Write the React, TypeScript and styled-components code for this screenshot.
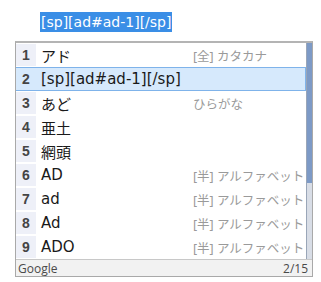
import React from 'react';
import styled, { createGlobalStyle } from 'styled-components';

const GlobalStyle = createGlobalStyle`
  body {
    margin: 0;
    background: #ffffff;
    font-family: "DejaVu Sans", "Noto Sans CJK JP", sans-serif;
  }
`;

const Page = styled.div`
  width: 321px;
  height: 282px;
  padding-top: 12px;
  box-sizing: border-box;
`;

const Composition = styled.div`
  margin-left: 40px;
  display: inline-block;
  height: 20px;
  line-height: 20px;
  padding: 0 1px;
  font-size: 14px;
  color: #ffffff;
  background: #3a8ee6;
`;

const Panel = styled.div`
  margin: 9px 0 0 15px;
  width: 298px;
  border: 1px solid #a9a9a9;
  border-top: 2px solid #b4b4b4;
  box-sizing: border-box;
  background: #ffffff;
`;

const Body = styled.div`
  display: flex;
`;

const List = styled.div`
  flex: 1;
  display: flex;
  flex-direction: column;
`;

const Row = styled.div<{ $selected?: boolean }>`
  display: flex;
  align-items: center;
  height: 24px;
  box-sizing: border-box;
  border: 1px solid ${(p) => (p.$selected ? '#7fb3ea' : 'transparent')};
  border-left: none;
  background: ${(p) => (p.$selected ? '#d6e9fc' : 'transparent')};
`;

const Num = styled.div<{ $selected?: boolean }>`
  width: 20px;
  align-self: stretch;
  display: flex;
  align-items: center;
  justify-content: center;
  font-family: "Liberation Sans", "DejaVu Sans", sans-serif;
  font-weight: 700;
  font-size: 14px;
  color: #454545;
  background: ${(p) => (p.$selected ? 'transparent' : '#eef0f8')};
`;

const Value = styled.div`
  flex: 1;
  padding-left: 5px;
  font-size: 15px;
  color: #1a1a1a;
  white-space: nowrap;
`;

const Desc = styled.div`
  width: 112px;
  font-family: "Noto Sans", "Noto Sans CJK JP", sans-serif;
  font-size: 12.5px;
  color: #9a9a9a;
  white-space: nowrap;
`;

const Scroll = styled.div`
  width: 5px;
  border-left: 1px solid #9aa6b8;
  background: #d8dde6;
  display: flex;
  flex-direction: column;
`;

const Thumb = styled.div`
  height: 140px;
  background: #7d9ac6;
`;

const Footer = styled.div`
  display: flex;
  justify-content: space-between;
  align-items: center;
  height: 16px;
  padding: 0 4px 0 2px;
  border-top: 1px solid #c8c8c8;
  background: #f2f2f2;
  font-family: "Open Sans", "DejaVu Sans", sans-serif;
  font-size: 12px;
  color: #4a4a4a;
`;

const items = [
  { v: 'アド', d: '[全] カタカナ' },
  { v: '[sp][ad#ad-1][/sp]', d: '' },
  { v: 'あど', d: 'ひらがな' },
  { v: '亜土', d: '' },
  { v: '網頭', d: '' },
  { v: 'AD', d: '[半] アルファベット' },
  { v: 'ad', d: '[半] アルファベット' },
  { v: 'Ad', d: '[半] アルファベット' },
  { v: 'ADO', d: '[半] アルファベット' },
];

export default function App() {
  return (
    <Page>
      <GlobalStyle />
      <Composition>[sp][ad#ad-1][/sp]</Composition>
      <Panel>
        <Body>
          <List>
            {items.map((it, i) => (
              <Row key={i} $selected={i === 1}>
                <Num $selected={i === 1}>{i + 1}</Num>
                <Value>{it.v}</Value>
                <Desc>{it.d}</Desc>
              </Row>
            ))}
          </List>
          <Scroll>
            <Thumb />
          </Scroll>
        </Body>
        <Footer>
          <span>Google</span>
          <span>2/15</span>
        </Footer>
      </Panel>
    </Page>
  );
}
